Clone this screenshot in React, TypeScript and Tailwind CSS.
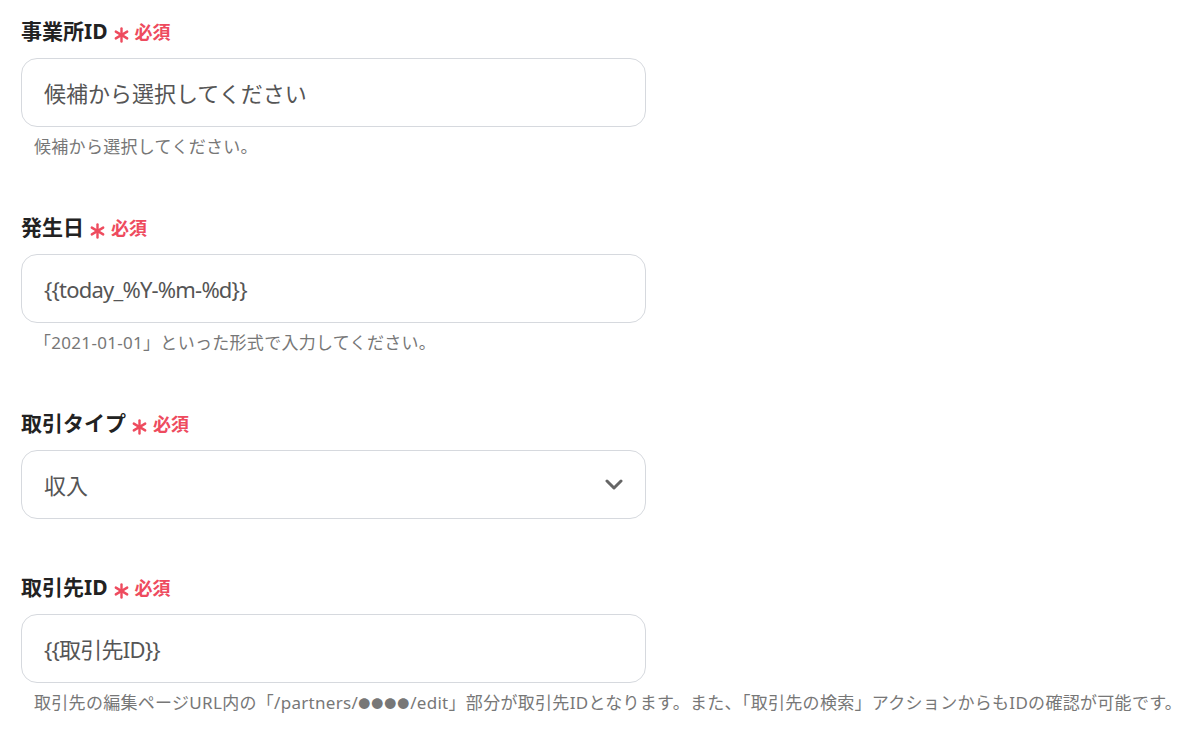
const font = {
  fontFamily: '"Noto Sans", "Noto Sans CJK JP", sans-serif',
};

const Asterisk = () => (
  <svg
    width="15"
    height="16"
    viewBox="0 0 15 16"
    className="mt-[8px] shrink-0"
    stroke="#ee4b5e"
    strokeWidth="2.4"
    strokeLinecap="round"
  >
    <line x1="7.5" y1="1.5" x2="7.5" y2="14.5" />
    <line x1="1.8" y1="4.6" x2="13.2" y2="11.4" />
    <line x1="1.8" y1="11.4" x2="13.2" y2="4.6" />
  </svg>
);

const Label = ({ text }: { text: string }) => (
  <div className="flex items-center gap-[6px] h-[28px]">
    <span className="text-[21px] font-bold text-[#222] leading-[28px]">
      {text}
    </span>
    <Asterisk />
    <span className="text-[18px] font-bold text-[#ee4b5e] leading-[28px] mt-[1px]">
      必須
    </span>
  </div>
);

const Field = (props: {
  label: string;
  value: string;
  help?: React.ReactNode;
  select?: boolean;
  tight?: boolean;
}) => {
  return (
    <div className="flex flex-col">
      <Label text={props.label} />
      <div className="mt-[13px] w-[625px] h-[69px] rounded-2xl border border-[#d6d9de] bg-white flex items-center justify-between pl-[22px] pr-[22px]">
        <span
          className={
            props.tight
              ? "text-[22px] text-[#555] leading-none tracking-[-0.8px]"
              : "text-[22px] text-[#555] leading-none"
          }
        >
          {props.value}
        </span>
        {props.select && (
          <svg
            width="18"
            height="11"
            viewBox="0 0 18 11"
            fill="none"
            stroke="#666"
            strokeWidth="3"
            strokeLinecap="round"
            strokeLinejoin="round"
          >
            <path d="M2 2l7 7 7-7" />
          </svg>
        )}
      </div>
      {props.help && (
        <p className="mt-[8px] pl-[13px] text-[17px] leading-[24px] tracking-[0.3px] text-[#777] whitespace-nowrap">
          {props.help}
        </p>
      )}
    </div>
  );
};

export default function App() {
  return (
    <div
      className="w-[1204px] h-[737px] bg-white overflow-hidden pl-[21px] pt-[17px] flex flex-col gap-[54px]"
      style={font}
    >
      <Field
        label="事業所ID"
        value="候補から選択してください"
        help="候補から選択してください。"
      />
      <Field
        label="発生日"
        value="{{today_%Y-%m-%d}}"
        tight
        help="「2021-01-01」といった形式で入力してください。"
      />
      <Field label="取引タイプ" value="収入" select />
      <Field
        label="取引先ID"
        value="{{取引先ID}}"
        tight
        help={
          <>
            取引先の編集ページURL内の「/partners/
            <span className="text-[12px] tracking-[1px]">●●●●</span>
            /edit」部分が取引先IDとなります。また、「取引先の検索」アクションからもIDの確認が可能です。
          </>
        }
      />
    </div>
  );
}
